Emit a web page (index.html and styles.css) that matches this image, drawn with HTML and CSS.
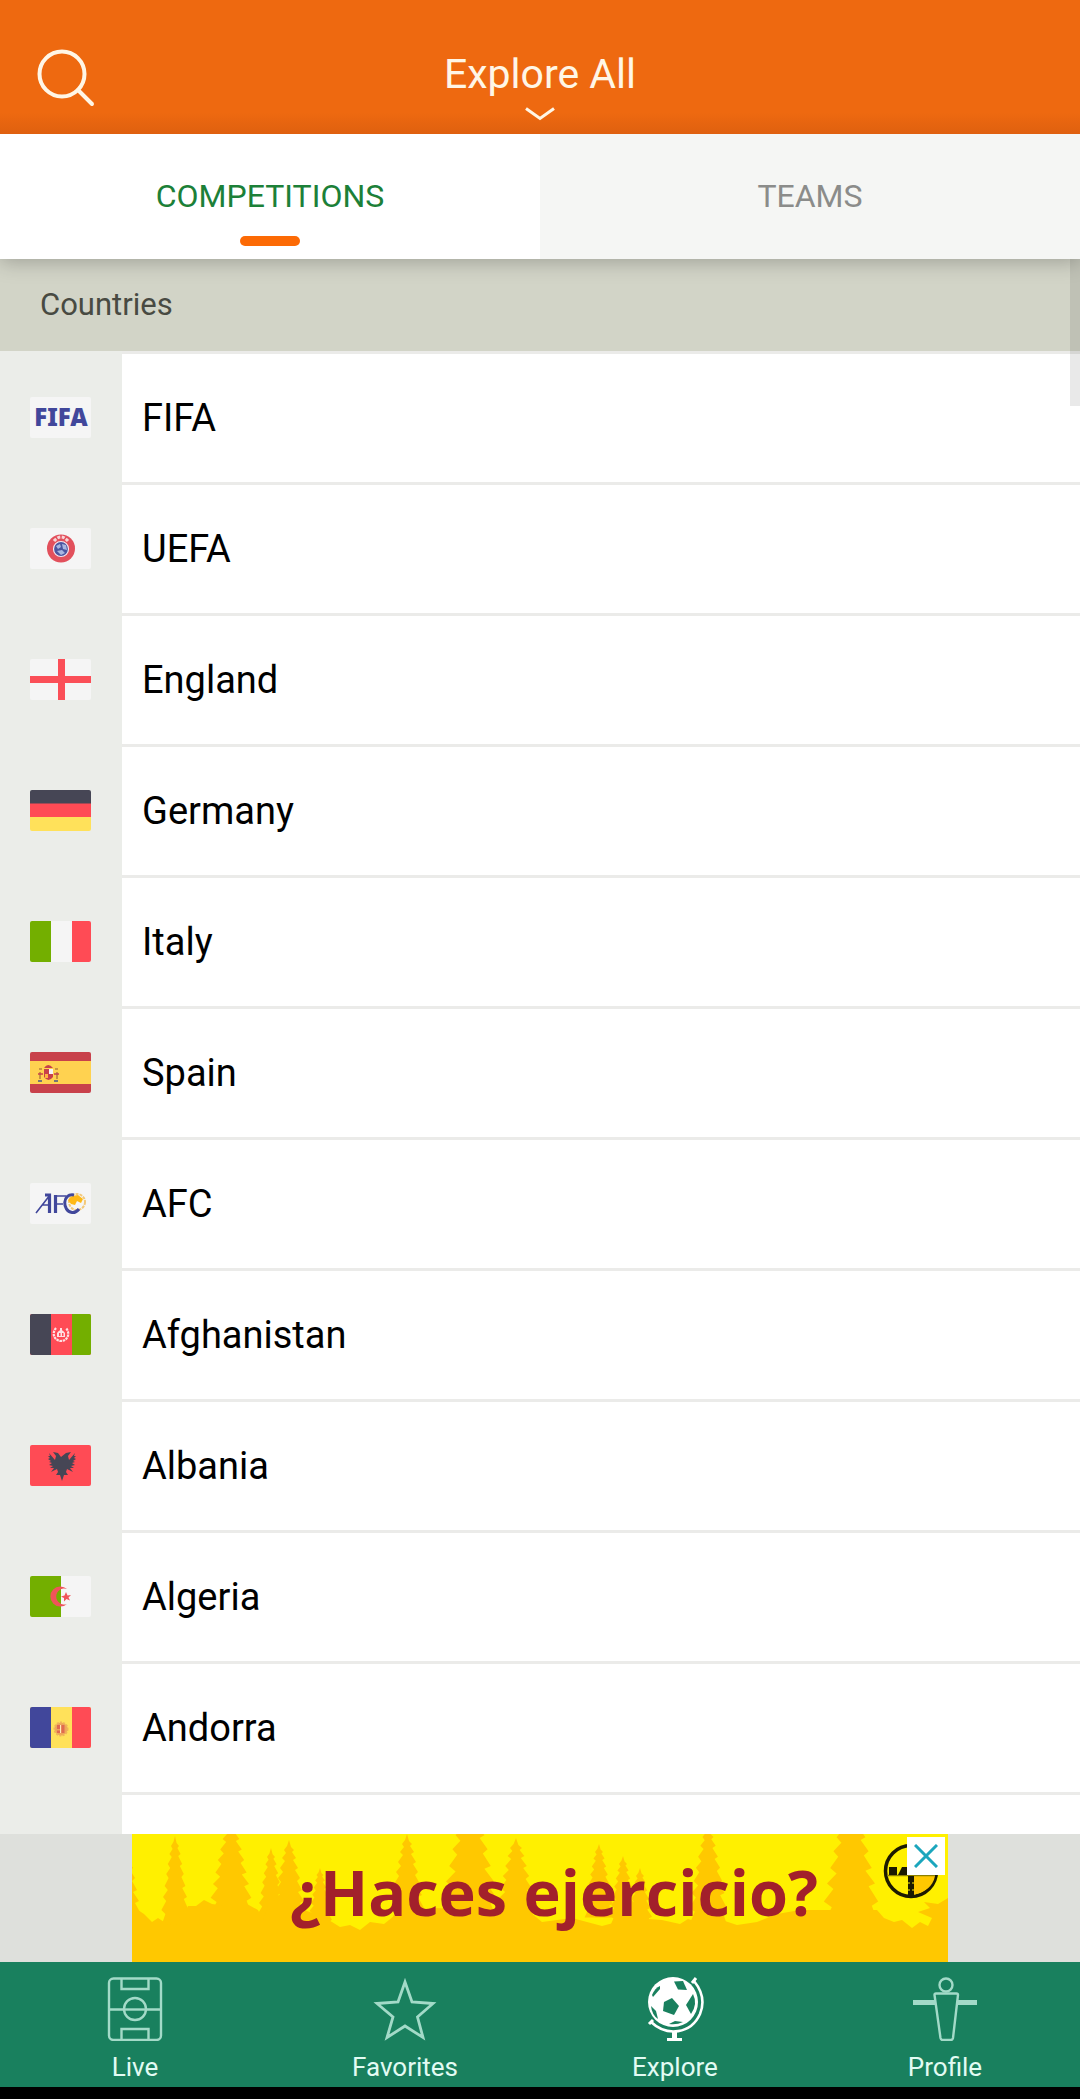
FILE: index.html
```html
<!DOCTYPE html>
<html lang="en">
<head>
  <meta charset="UTF-8">
  <title>Explore All</title>
  <meta name="viewport" content="width=device-width, initial-scale=1.0">
  <link rel="stylesheet" href="styles.css">
</head>
<body>
  <header>
    <button class="search-btn" type="button" aria-label="Search">
      <svg width="60" height="60" viewBox="0 0 60 60" fill="none" stroke="#fff6e6" stroke-width="4" stroke-linecap="round">
        <circle cx="26" cy="26" r="22.5"/>
        <path d="M42 42L56 56"/>
      </svg>
    </button>
    <button class="title-btn" type="button">
      <span>Explore All</span>
      <svg width="32" height="16" viewBox="0 0 32 16" fill="none" stroke="#fff6e6" stroke-width="3">
        <path d="M2 2.5L16 12.5L30 2.5"/>
      </svg>
    </button>
  </header>

  <nav class="tabs">
    <a href="#competitions" class="active">COMPETITIONS</a>
    <a href="#teams">TEAMS</a>
  </nav>

  <main>
    <h2>Countries</h2>
    <ul class="countries">
      <li><a href="#fifa">
        <span class="flag"><svg viewBox="0 0 61 41"><rect width="61" height="41" fill="#f5f5f5"/><text class="fifa" x="31" y="29" text-anchor="middle">FIFA</text></svg></span>
        <span class="name">FIFA</span>
      </a></li>
      <li><a href="#uefa">
        <span class="flag"><svg viewBox="0 0 61 41">
          <rect width="61" height="41" fill="#f5f5f5"/>
          <circle cx="31" cy="20.5" r="14" fill="#e2505c"/>
          <path d="M24 13Q31 5 38 13" fill="none" stroke="#f7d5d8" stroke-width="3" stroke-dasharray="3 1.5"/>
          <circle cx="31" cy="21" r="7.5" fill="#4a56a0" stroke="#f5e6ee" stroke-width="1.2"/>
          <path d="M26 18l4-2 1 3-3 2zM32 16l4 1 1 5-4-1zM27 23l5-1 3 3-4 2z" fill="#a8b6e0"/>
        </svg></span>
        <span class="name">UEFA</span>
      </a></li>
      <li><a href="#england">
        <span class="flag"><svg viewBox="0 0 61 41"><rect width="61" height="41" fill="#f5f5f5"/><path d="M28 0h7v41h-7zM0 17h61v7H0z" fill="#fb4f58"/></svg></span>
        <span class="name">England</span>
      </a></li>
      <li><a href="#germany">
        <span class="flag"><svg viewBox="0 0 61 41"><rect width="61" height="14" fill="#464655"/><rect y="13.5" width="61" height="14" fill="#ff4b55"/><rect y="27" width="61" height="14" fill="#ffe15a"/></svg></span>
        <span class="name">Germany</span>
      </a></li>
      <li><a href="#italy">
        <span class="flag"><svg viewBox="0 0 61 41"><rect width="61" height="41" fill="#f5f5f5"/><rect width="21" height="41" fill="#73af00"/><rect x="42" width="19" height="41" fill="#ff4b55"/></svg></span>
        <span class="name">Italy</span>
      </a></li>
      <li><a href="#spain">
        <span class="flag"><svg viewBox="0 0 61 41">
          <rect width="61" height="41" fill="#c8414b"/>
          <rect y="9" width="61" height="23" fill="#ffd250"/>
          <path d="M14 16q4-6 9 0z" fill="#c8414b"/>
          <path d="M9 17h3M25 17h3M10 20v7M27 20v7M8 29h4M24 29h4" stroke="#b8823c" stroke-width="1.6"/>
          <path d="M8 29h4M24 29h4" stroke="#5b6a8c" stroke-width="1.4"/>
          <path d="M8 22h5M24 22h5" stroke="#c8414b" stroke-width="1.5"/>
          <path d="M14 17h9v8q-4.500 6-9 0z" fill="#c8414b"/>
          <path d="M19 17h4v5h-4z" fill="#f5f5f5"/>
          <path d="M15 22h3v4h-3z" fill="#ffb441"/>
        </svg></span>
        <span class="name">Spain</span>
      </a></li>
      <li><a href="#afc">
        <span class="flag"><svg viewBox="0 0 61 41">
          <rect width="61" height="41" fill="#f5f5f5"/>
          <path d="M6 30L20 12M12 22h7M26 13h10M26 21h7" fill="none" stroke="#41479b" stroke-width="1.6"/>
          <path d="M15 12h4.500v18M25.500 12v18" fill="none" stroke="#41479b" stroke-width="3.200"/>
          <circle cx="47" cy="19" r="8" fill="none" stroke="#f3c877" stroke-width="2" stroke-dasharray="3 1"/>
          <path d="M38 17l4-4 6-1 5 4-2 4-4-2-2 4-4-1z" fill="#ffb915"/>
          <path d="M44 12C32 10 32 28 42 29.500Q46 30 49 26" fill="none" stroke="#41479b" stroke-width="3"/>
        </svg></span>
        <span class="name">AFC</span>
      </a></li>
      <li><a href="#afghanistan">
        <span class="flag"><svg viewBox="0 0 61 41">
          <rect width="61" height="41" fill="#ff4b55"/><rect width="21" height="41" fill="#464655"/><rect x="42" width="19" height="41" fill="#73af00"/>
          <path d="M26 14C21 20 25 27 31 27S41 20 36 14" fill="none" stroke="#ffe0e2" stroke-width="2.200" stroke-dasharray="2.500 .7"/>
          <path d="M27 23v-4q4-6 8 0v4zM30 14h2v4h-2z" fill="#ffe0e2"/>
          <path d="M29 19h1.500v3H29zM32 19h1.500v3H32z" fill="#ff4b55"/>
        </svg></span>
        <span class="name">Afghanistan</span>
      </a></li>
      <li><a href="#albania">
        <span class="flag"><svg viewBox="0 0 61 41">
          <rect width="61" height="41" fill="#ff4b55"/>
          <path d="M31 12l-3-4-5-1 3 4-1 4-6-7 1 3-2 0 2 2-2 1 3 2-2 1 3 1-3 2 4 1-3 2 4 0-3 4 6-3 1 3-2 3 4 0 2 6 2-6 4 0-2-3 1-3 6 3-3-4 4 0-3-2 4-1-3-2 3-1-2-1 3-2-2-1 2-2-2 0 1-3-6 7-1-4 3-4-5 1z" fill="#464655"/>
        </svg></span>
        <span class="name">Albania</span>
      </a></li>
      <li><a href="#algeria">
        <span class="flag"><svg viewBox="0 0 61 41">
          <rect width="61" height="41" fill="#f5f5f5"/><rect width="31" height="41" fill="#73af00"/>
          <path d="M37 13A10 10 0 1 0 37 28A8 8 0 1 1 37 13Z" fill="#f0545a"/>
          <path d="M36 16l1.500 3.500 3.500-.5-2.500 2.500 1.500 3-3.500-1.500-2.500 2.500v-3.500l-3-1.500 3.500-1z" fill="#f0545a"/>
        </svg></span>
        <span class="name">Algeria</span>
      </a></li>
      <li><a href="#andorra">
        <span class="flag"><svg viewBox="0 0 61 41">
          <rect width="61" height="41" fill="#ffe15a"/><rect width="21" height="41" fill="#41479b"/><rect x="42" width="19" height="41" fill="#ff4b55"/>
          <circle cx="31" cy="22" r="6.500" fill="#eda65a" stroke="#f0b45a" stroke-width="2" stroke-dasharray="2 1.200"/>
          <path d="M27 18h3v4h-3zM31.500 18h3v8h-3zM27 23.500h3v2.500h-3z" fill="#e06a50"/>
          <path d="M30 18h1v8h-1z" fill="#ffe8c0"/>
        </svg></span>
        <span class="name">Andorra</span>
      </a></li>
      <li class="rest"></li>
    </ul>
    <div class="scrollbar"></div>
  </main>

  <aside class="ad">
    <a href="#ad" class="banner">
      <svg class="forest" viewBox="0 0 816 128" preserveAspectRatio="none">
        <defs>
          <path id="tree" d="M0 0L2 7L5 10L3 12L7 18L4 20L9 28L6 30L11 38L8 41L13 50L9 52L15 61L11 63L17 74L13 77L18 92L-18 92L-12 78L-17 74L-11 65L-15 61L-9 54L-13 50L-8 42L-11 38L-6 32L-9 28L-4 21L-7 18L-3 13L-5 10L-2 6Z"/>
        </defs>
        <rect width="816" height="128" fill="#fff000"/>
        <g fill="#ffc800">
          <use href="#tree" transform="translate(-8 6)"/>
          <use href="#tree" transform="translate(43 2) scale(.8 1)"/>
          <use href="#tree" transform="translate(99 -14) scale(1.200 1.050)"/>
          <use href="#tree" transform="translate(139 14) scale(.8 .9)"/>
          <use href="#tree" transform="translate(157 6)"/>
          <use href="#tree" transform="translate(188 34) scale(.7)"/>
          <use href="#tree" transform="translate(275 0)"/>
          <use href="#tree" transform="translate(338 -38) scale(1.600 1.400)"/>
          <use href="#tree" transform="translate(384 4) scale(1.200 1)"/>
          <use href="#tree" transform="translate(467 10) scale(.8)"/>
          <use href="#tree" transform="translate(491 22) scale(.8)"/>
          <use href="#tree" transform="translate(508 34) scale(.8)"/>
          <use href="#tree" transform="translate(576 -8) scale(1.100)"/>
          <use href="#tree" transform="translate(719 -36) scale(1.600 1.400)"/>
          <path d="M0 70L6 76L12 80L20 88L26 84L35 90L48 91L56 72L64 72L72 66L80 70L95 72L115 70L126 76L131 86L136 72L160 72L190 82L200 88L208 93L218 91L228 96L238 88L252 90L262 82L300 74L370 76L398 78L410 88L440 84L470 92L500 84L530 86L548 90L556 85L572 90L590 86L605 91L625 88L645 80L668 76L745 76L752 84L762 88L770 86L780 94L788 88L796 92L800 84L786 78L798 74L792 68L806 70L816 64V128H0Z"/>
        </g>
        <g>
          <circle cx="779" cy="37" r="25.500" fill="#fff000" stroke="#1c1a00" stroke-width="3.500"/>
          <path d="M781 42H803Q800 57 781 61Z" fill="#ffc800"/>
          <path d="M755 41.500H803" stroke="#8c8000" stroke-width="1.500"/>
          <path d="M757 33h8v8h-8zM766 41l4-8h5v8zM776 42h6v19h-6z" fill="#1c1a00"/>
          <path d="M776 49h2M780 49h2M776 56h2M780 56h2" stroke="#fff000" stroke-width="1"/>
        </g>
      </svg>
      <span class="slogan">¿Haces ejercicio?</span>
    </a>
    <button class="ad-close" type="button" aria-label="Close">
      <svg width="24" height="24" viewBox="0 0 24 24" stroke="#1ba6bd" stroke-width="3"><path d="M1 1L23 23M23 1L1 23"/></svg>
    </button>
  </aside>

  <nav class="bottom-nav">
    <a href="#live">
      <svg viewBox="0 0 64 64" fill="none" stroke="#a3dac8" stroke-width="2.400">
        <rect x="6" y="1.500" width="52" height="61.500" rx="4.500"/>
        <path d="M6 32.500H21M43 32.500H58M18.500 2V12H45.500V2M18.500 62V52H45.500V62"/>
        <circle cx="32" cy="32" r="11"/>
        <path d="M21 32.500H43"/>
      </svg>
      <span>Live</span>
    </a>
    <a href="#favorites">
      <svg viewBox="0 0 64 64" fill="none" stroke="#a3dac8" stroke-width="2.800">
        <path d="M32 5L39 25L60 26.500L44.500 40L50 60.500L32 49L14 60.500L20 40L4 26.500L25 25Z"/>
      </svg>
      <span>Favorites</span>
    </a>
    <a href="#explore" class="active">
      <svg viewBox="0 0 64 64" fill="none">
        <circle cx="30" cy="25" r="25" fill="#fff"/>
        <g fill="#19805e">
          <path d="M21 25L29 21L36 29L31 38L20 34Z"/>
          <path d="M31 4.500L40 4L44 13L35 12.500Z"/>
          <path d="M50 17Q55 27 48 37L43 28Z"/>
          <path d="M9 18Q12 11 17 9L17 12L10 20Z"/>
          <path d="M8 29L13 34L15 42Q9 38 8 29Z"/>
          <path d="M26 47L32 44L40 45Q34 48 26 47Z"/>
        </g>
        <path d="M51 4Q64 20 57 37C48 57 24 60 8 45" stroke="#fff" stroke-width="2.600"/>
        <path d="M49 6L53 1M6 47L10 43" stroke="#fff" stroke-width="3"/>
        <path d="M29 54h5v7h5v3H24v-3h5z" fill="#fff"/>
      </svg>
      <span>Explore</span>
    </a>
    <a href="#profile">
      <svg viewBox="0 0 64 64" fill="none" stroke="#a3dac8" stroke-width="2.400">
        <circle cx="33" cy="8" r="6.500"/>
        <path d="M23 16.500H43.500Q45 16.500 45 18L40 61Q39.500 63 38 63H29.500Q28 63 27.500 61L21.500 18Q21.500 16.500 23 16.500Z"/>
        <path d="M0 25.500H22M45 25.500H64" stroke-width="5"/>
      </svg>
      <span>Profile</span>
    </a>
  </nav>
</body>
</html>
```
FILE: styles.css
```css
* { box-sizing: border-box; }
body { margin: 0; height: 100vh; display: flex; flex-direction: column; background: #000; color: #000; font-family: Roboto, 'Liberation Sans', Arial, sans-serif; }
a { text-decoration: none; color: inherit; }
button { border: none; background: none; padding: 0; font: inherit; color: inherit; cursor: pointer; }
svg { display: block; }

header { display: grid; grid-template-columns: 1fr auto 1fr; padding: 48px 36px 12px; background: linear-gradient(#ee6910 0, #ee6910 84%, #df600f 100%); color: #fff6e6; }
.search-btn { justify-self: start; align-self: start; }
.title-btn { display: flex; flex-direction: column; align-items: center; font-size: 41px; line-height: 52px; gap: 6px; }

.tabs { display: flex; position: relative; z-index: 2; box-shadow: 0 2px 20px #0004; clip-path: inset(0 0 -30px 0); }
.tabs a { flex: 1; position: relative; height: 125px; line-height: 125px; text-align: center; font-size: 32px; background: #f5f6f4; color: #8b8c8a; }
.tabs a.active { background: #fff; color: #1c8038; }
.tabs a.active::after { content: ''; position: absolute; left: 50%; bottom: 13px; width: 60px; height: 10px; margin-left: -30px; border-radius: 5px; background: #fc6a05; }

main { flex: 1; min-height: 0; position: relative; display: flex; flex-direction: column; overflow: hidden; }
h2 { margin: 0; padding: 0 40px; font-size: 31px; line-height: 92px; font-weight: 400; background: #d2d4c7; color: #484a42; }
.countries { flex: 1; min-height: 0; margin: 0; padding: 0; list-style: none; display: flex; flex-direction: column; background: #ebede9; }
.countries li { flex: none; }
.countries a { display: flex; align-items: stretch; }
.flag { flex: none; width: 122px; padding: 46px 31px 44px 30px; }
.flag svg { width: 61px; height: 41px; border-radius: 2px; }
.fifa { font: 900 24px 'Noto Sans', 'Open Sans', sans-serif; fill: #41479b; }
.name { flex: 1; padding-left: 20px; border-top: 3px solid #ebebe9; background: #fff; font-size: 38px; line-height: 128px; }
.countries .rest { flex: 1; margin-left: 122px; border-top: 3px solid #ebebe9; background: #fff; }
.scrollbar { position: absolute; top: 0; right: 0; width: 10px; height: 147px; background: #00000016; }

.ad { flex: none; position: relative; width: 100%; display: flex; justify-content: center; background: #dee0dc; }
.banner { position: relative; width: 816px; height: 128px; overflow: hidden; display: flex; align-items: flex-start; justify-content: center; padding-left: 28px; }
.forest { position: absolute; top: 0; left: 0; width: 100%; height: 100%; }
.slogan { position: relative; font: 700 63px/116px 'Open Sans', 'Noto Sans', sans-serif; color: #a2202b; }
.ad-close { position: absolute; top: 3px; left: 50%; margin-left: 367px; width: 38px; height: 38px; padding: 7px; background: #fff; }

.bottom-nav { flex: none; display: flex; margin-bottom: 12px; background: #19805e; }
.bottom-nav a { flex: 1; display: flex; flex-direction: column; align-items: center; gap: 10px; padding: 15px 0 4px; font-size: 26px; line-height: 32px; color: #e2fbf3; }
.bottom-nav svg { width: 64px; height: 64px; }
```
